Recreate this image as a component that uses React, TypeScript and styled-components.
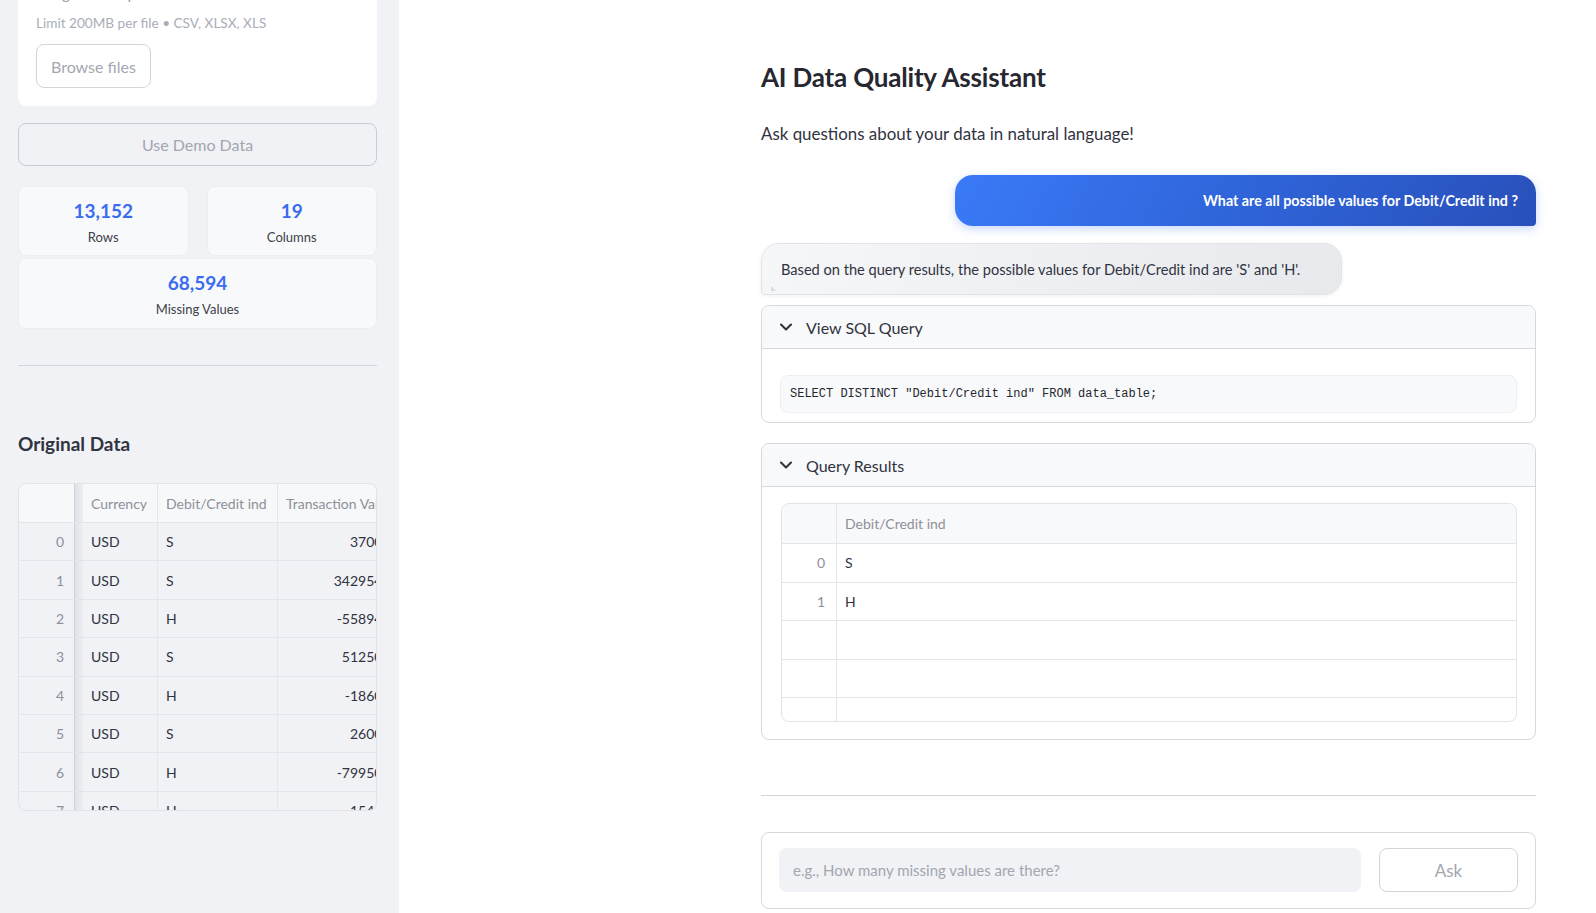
import React, { useLayoutEffect, useRef } from "react";
import styled, { createGlobalStyle } from "styled-components";
import { ChevronDown } from "lucide-react";

const GlobalStyle = createGlobalStyle`
  *, *::before, *::after { box-sizing: border-box; }
  html, body { margin: 0; padding: 0; height: 100%; }
  body {
    font-family: Lato, "Noto Sans", sans-serif;
    color: #31333f;
    background: #ffffff;
    -webkit-font-smoothing: antialiased;
  }
  #root { height: 100%; }
`;

const Shell = styled.div`
  display: flex;
  height: 100vh;
  overflow: hidden;
`;

/* ---------------- Sidebar ---------------- */

const Sidebar = styled.aside`
  position: relative;
  width: 399px;
  flex-shrink: 0;
  background: #f0f2f6;
  overflow: hidden;
`;

const SidebarInner = styled.div`
  display: flex;
  flex-direction: column;
  padding: 24px 22px 140px 18px;
`;

const FieldLabel = styled.div`
  font-size: 14px;
  line-height: 20px;
  color: #31333f;
  margin-bottom: 8px;
`;

const UploaderCard = styled.section`
  background: #ffffff;
  border-radius: 8px;
  padding: 16px 18px 18px;
  display: flex;
  flex-direction: column;
  align-items: flex-start;
`;

const DropText = styled.div`
  font-size: 16px;
  line-height: 24px;
  color: #9ea2ad;
`;

const LimitText = styled.div`
  margin-top: 8px;
  font-size: 13.6px;
  line-height: 20px;
  color: #a9adb7;
`;

const BrowseButton = styled.button`
  margin-top: 11px;
  height: 44px;
  padding: 0 14px;
  background: #ffffff;
  border: 1px solid #d3d5db;
  border-radius: 8px;
  font-family: inherit;
  font-size: 16px;
  color: #a3a7b1;
`;

const DemoButton = styled.button`
  margin-top: 17px;
  height: 43px;
  width: 100%;
  background: #f0f2f6;
  border: 1px solid #c9ccd3;
  border-radius: 8px;
  font-family: inherit;
  font-size: 16px;
  color: #a3a6ae;
`;

const MetricsGrid = styled.div`
  margin-top: 20px;
  display: grid;
  grid-template-columns: 1fr 1fr;
  column-gap: 18px;
  row-gap: 2px;
`;

const MetricCard = styled.div<{ $wide?: boolean; $h: number }>`
  grid-column: ${(p) => (p.$wide ? "1 / span 2" : "auto")};
  height: ${(p) => p.$h}px;
  background: #f8f9fb;
  border: 1px solid #eceef2;
  border-radius: 8px;
  display: flex;
  flex-direction: column;
  align-items: center;
  padding-top: 12px;
`;

const MetricValue = styled.div`
  font-size: 19px;
  line-height: 24px;
  font-weight: 700;
  color: #3a6cf0;
`;

const MetricLabel = styled.div`
  margin-top: 5px;
  font-size: 13px;
  line-height: 18px;
  color: #3d3f4a;
`;

const Divider = styled.hr<{ $mt: number }>`
  margin: ${(p) => p.$mt}px 0 0;
  border: none;
  border-top: 1px solid #d3d5da;
  height: 0;
  width: 100%;
`;

const SectionTitle = styled.h3`
  margin: 64px 0 0;
  font-size: 19px;
  line-height: 28px;
  font-weight: 700;
  color: #31333f;
`;

/* ---------------- Data grid ---------------- */

const GridFrame = styled.div<{ $h: number; $bg: string; $mt: number }>`
  margin-top: ${(p) => p.$mt}px;
  height: ${(p) => p.$h}px;
  width: 100%;
  border: 1px solid #e1e3e8;
  border-radius: 8px;
  overflow: hidden;
  background: ${(p) => p.$bg};
`;

const GridRow = styled.div<{ $cols: string; $h: number; $bg?: string }>`
  display: grid;
  grid-template-columns: ${(p) => p.$cols};
  height: ${(p) => p.$h}px;
  border-bottom: 1px solid #e3e5ea;
  background: ${(p) => p.$bg || "transparent"};
  font-size: 14px;
`;

const Cell = styled.div<{ $align?: "left" | "right"; $muted?: boolean }>`
  display: flex;
  align-items: center;
  justify-content: ${(p) => (p.$align === "right" ? "flex-end" : "flex-start")};
  padding: 0 8px;
  border-right: 1px solid #e3e5ea;
  white-space: nowrap;
  overflow: hidden;
  color: ${(p) => (p.$muted ? "#8d9099" : "#31333f")};
  &:last-child { border-right: none; }
`;

const FrozenIndexCell = styled(Cell)`
  justify-content: flex-end;
  padding-right: 19px;
  border-right: none;
  color: #8d9099;
  background: linear-gradient(
    to right,
    transparent 0,
    transparent 55px,
    #cfd2d8 55px,
    #cfd2d8 56px,
    #e0e2e7 56px,
    #eceef2 64px
  );
`;

const IndexCell = styled(Cell)`
  justify-content: flex-end;
  padding-right: 11px;
  color: #8d9099;
`;

/* ---------------- Main ---------------- */

const Main = styled.main`
  flex: 1;
  display: grid;
  grid-template-columns: 1fr 775px;
  padding: 0 60px 0 0;
  overflow: hidden;
`;

const ChatColumn = styled.div`
  grid-column: 2;
  display: flex;
  flex-direction: column;
  padding-top: 57px;
`;

const Title = styled.h1`
  margin: 0;
  font-size: 26px;
  letter-spacing: -0.2px;
  line-height: 40px;
  font-weight: 700;
  color: #262730;
`;

const Subtitle = styled.p`
  margin: 24px 0 0;
  font-size: 16.9px;
  line-height: 26px;
  color: #31333f;
`;

const UserBubble = styled.div`
  margin-top: 28px;
  margin-left: auto;
  width: 75%;
  height: 51px;
  padding: 0 18px;
  display: flex;
  align-items: center;
  justify-content: flex-end;
  border-radius: 18px 18px 4px 18px;
  background: linear-gradient(120deg, #3a7af7 0%, #2e62d6 55%, #2950ba 100%);
  box-shadow: 0 3px 10px rgba(59, 110, 245, 0.28);
  color: #ffffff;
  font-size: 14.3px;
  font-weight: 700;
`;

const AssistantBubble = styled.div`
  position: relative;
  margin-top: 17px;
  width: 75%;
  height: 52px;
  padding: 0 19px;
  display: flex;
  align-items: center;
  border-radius: 18px 18px 18px 4px;
  border: 1px solid #e1e3e8;
  background: linear-gradient(120deg, #f6f7f9 0%, #eceef1 60%, #e7e9ed 100%);
  box-shadow: 0 1px 4px rgba(0, 0, 0, 0.06);
  font-size: 14.6px;
  color: #31333f;

  &::after {
    content: "";
    position: absolute;
    left: 9px;
    bottom: 3px;
    width: 0;
    height: 0;
    border-bottom: 5px solid #d8dadf;
    border-right: 5px solid transparent;
  }
`;

const Expander = styled.details<{ $mt: number }>`
  margin-top: ${(p) => p.$mt}px;
  border: 1px solid #d6d8dd;
  border-radius: 8px;
  overflow: hidden;
  background: #ffffff;
`;

const ExpanderHeader = styled.summary`
  list-style: none;
  height: 43px;
  display: flex;
  align-items: center;
  gap: 10px;
  padding: 0 14px;
  background: #f8f9fb;
  border-bottom: 1px solid #d6d8dd;
  font-size: 16px;
  color: #31333f;
  cursor: pointer;
  &::-webkit-details-marker { display: none; }
  svg { color: #31333f; flex-shrink: 0; }
`;

const ExpanderBody = styled.div<{ $pad: string }>`
  padding: ${(p) => p.$pad};
`;

const CodeBlock = styled.pre`
  margin: 0;
  height: 38px;
  display: flex;
  align-items: center;
  padding: 0 9px;
  background: #f8f9fb;
  border: 1px solid #eceef1;
  border-radius: 8px;
  font-family: "Liberation Mono", "DejaVu Sans Mono", monospace;
  font-size: 12px;
  color: #262730;
`;

const AskForm = styled.form`
  margin-top: 36px;
  height: 77px;
  border: 1px solid #d6d8dd;
  border-radius: 8px;
  padding: 15px 17px 0;
  display: flex;
  gap: 18px;
`;

const AskInput = styled.input`
  flex: 1;
  height: 44px;
  border: none;
  outline: none;
  border-radius: 8px;
  background: #f0f2f6;
  padding: 0 14px;
  font-family: inherit;
  font-size: 15px;
  color: #31333f;
  &::placeholder { color: #a3a6ae; }
`;

const AskButton = styled.button`
  width: 139px;
  height: 44px;
  background: #ffffff;
  border: 1px solid #d3d5db;
  border-radius: 8px;
  font-family: inherit;
  font-size: 17px;
  color: #a3a6ae;
`;

const sideCols = "64px 75px 120px 132px";
const sideRows: [string, string, string, string][] = [
  ["0", "USD", "S", "3700.00"],
  ["1", "USD", "S", "342954.12"],
  ["2", "USD", "H", "-55894.50"],
  ["3", "USD", "S", "51250.00"],
  ["4", "USD", "H", "-1860.00"],
  ["5", "USD", "S", "2600.00"],
  ["6", "USD", "H", "-79950.00"],
  ["7", "USD", "H", "1540.00"],
];

const resultCols = "55px 1fr";
const resultRows: [string, string][] = [
  ["0", "S"],
  ["1", "H"],
  ["", ""],
  ["", ""],
  ["", ""],
];

export default function App() {
  const sideRef = useRef<HTMLElement>(null);
  const cardRef = useRef<HTMLElement>(null);

  useLayoutEffect(() => {
    if (sideRef.current && cardRef.current) {
      sideRef.current.scrollTop = cardRef.current.offsetTop + 35;
    }
  }, []);

  return (
    <>
      <GlobalStyle />
      <Shell>
        <Sidebar ref={sideRef}>
          <SidebarInner>
            <FieldLabel>Upload your data file</FieldLabel>
            <UploaderCard ref={cardRef}>
              <DropText>Drag and drop file here</DropText>
              <LimitText>Limit 200MB per file • CSV, XLSX, XLS</LimitText>
              <BrowseButton type="button">Browse files</BrowseButton>
            </UploaderCard>

            <DemoButton type="button">Use Demo Data</DemoButton>

            <MetricsGrid>
              <MetricCard $h={70}>
                <MetricValue>13,152</MetricValue>
                <MetricLabel>Rows</MetricLabel>
              </MetricCard>
              <MetricCard $h={70}>
                <MetricValue>19</MetricValue>
                <MetricLabel>Columns</MetricLabel>
              </MetricCard>
              <MetricCard $wide $h={71}>
                <MetricValue>68,594</MetricValue>
                <MetricLabel>Missing Values</MetricLabel>
              </MetricCard>
            </MetricsGrid>

            <Divider $mt={36} />

            <SectionTitle>Original Data</SectionTitle>

            <GridFrame $mt={25} $h={328} $bg="#f0f2f6">
              <GridRow $cols={sideCols} $h={39} $bg="#f7f8fa">
                <FrozenIndexCell />
                <Cell $muted>Currency</Cell>
                <Cell $muted>Debit/Credit ind</Cell>
                <Cell $muted>Transaction Value</Cell>
              </GridRow>
              {sideRows.map((r) => (
                <GridRow key={r[0]} $cols={sideCols} $h={38.4}>
                  <FrozenIndexCell>{r[0]}</FrozenIndexCell>
                  <Cell>{r[1]}</Cell>
                  <Cell>{r[2]}</Cell>
                  <Cell $align="right">{r[3]}</Cell>
                </GridRow>
              ))}
            </GridFrame>
          </SidebarInner>
        </Sidebar>

        <Main>
          <ChatColumn>
            <Title>AI Data Quality Assistant</Title>
            <Subtitle>Ask questions about your data in natural language!</Subtitle>

            <UserBubble>What are all possible values for Debit/Credit ind ?</UserBubble>
            <AssistantBubble>
              Based on the query results, the possible values for Debit/Credit ind are 'S' and 'H'.
            </AssistantBubble>

            <Expander $mt={10} open>
              <ExpanderHeader>
                <ChevronDown size={20} strokeWidth={2.5} />
                View SQL Query
              </ExpanderHeader>
              <ExpanderBody $pad="26px 18px 9px">
                <CodeBlock>SELECT DISTINCT "Debit/Credit ind" FROM data_table;</CodeBlock>
              </ExpanderBody>
            </Expander>

            <Expander $mt={20} open>
              <ExpanderHeader>
                <ChevronDown size={20} strokeWidth={2.5} />
                Query Results
              </ExpanderHeader>
              <ExpanderBody $pad="16px 18px 17px 19px">
                <GridFrame $mt={0} $h={219} $bg="#ffffff">
                  <GridRow $cols={resultCols} $h={40} $bg="#f8f9fb">
                    <IndexCell />
                    <Cell $muted>Debit/Credit ind</Cell>
                  </GridRow>
                  {resultRows.map((r, i) => (
                    <GridRow key={i} $cols={resultCols} $h={38.5}>
                      <IndexCell>{r[0]}</IndexCell>
                      <Cell>{r[1]}</Cell>
                    </GridRow>
                  ))}
                </GridFrame>
              </ExpanderBody>
            </Expander>

            <Divider $mt={55} />

            <AskForm onSubmit={(e) => e.preventDefault()}>
              <AskInput placeholder="e.g., How many missing values are there?" />
              <AskButton type="submit">Ask</AskButton>
            </AskForm>
          </ChatColumn>
        </Main>
      </Shell>
    </>
  );
}
